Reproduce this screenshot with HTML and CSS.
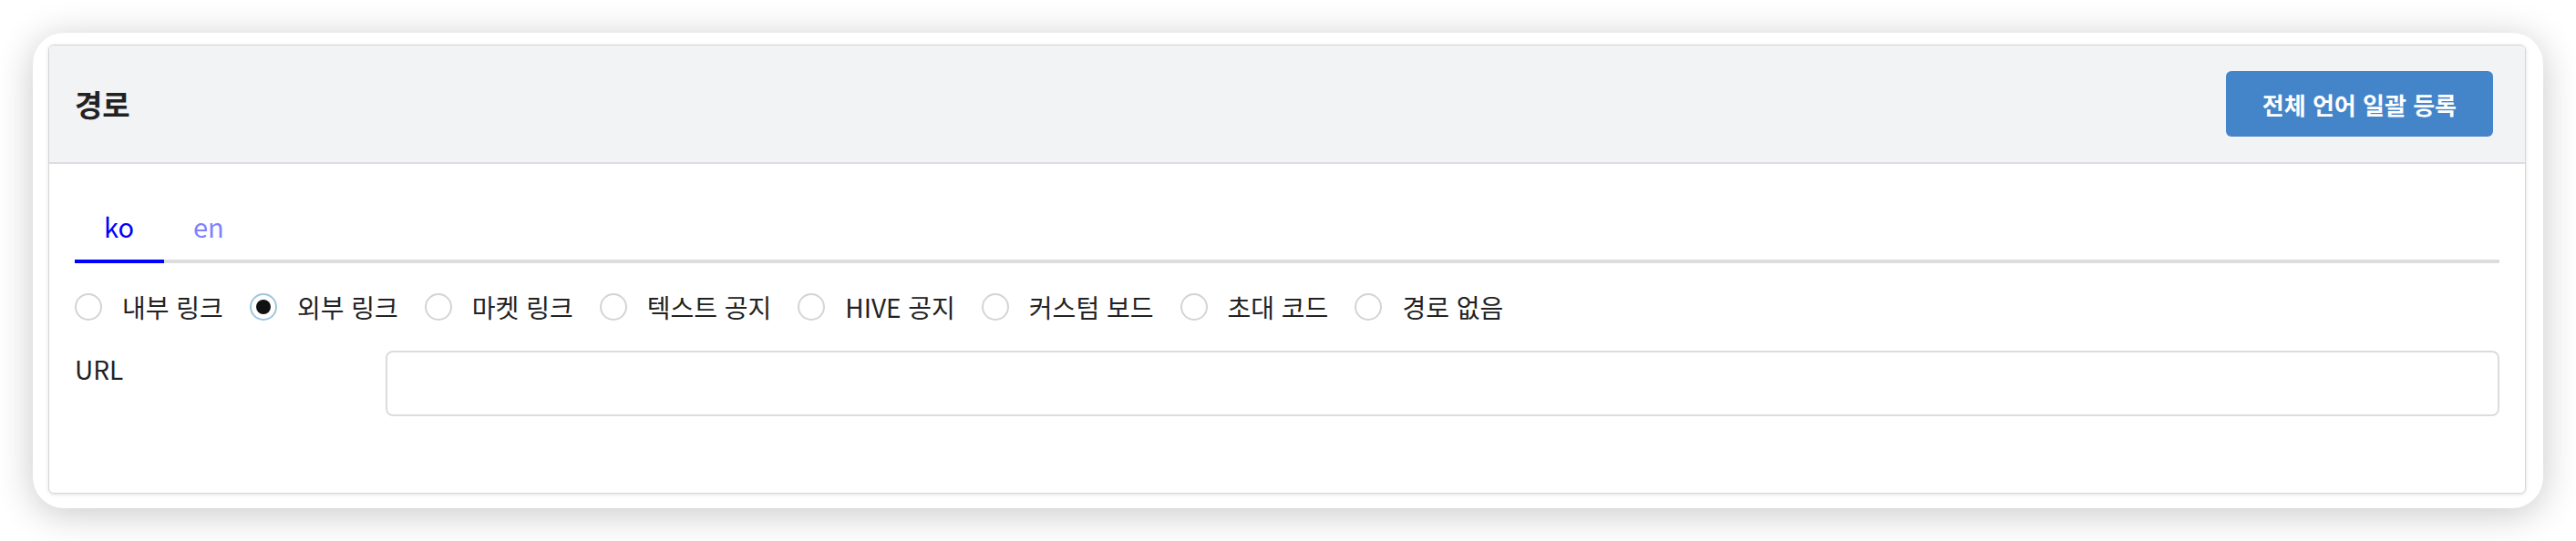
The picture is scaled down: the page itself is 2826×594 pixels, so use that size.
FILE: index.html
```html
<!DOCTYPE html>
<html lang="ko">
<head>
    <meta charset="UTF-8">
    <meta name="viewport" content="width=device-width, initial-scale=1.0">
    <title>경로</title>
    <link rel="stylesheet" href="styles.css">
</head>
<body>
    <div class="frame">
        <div class="card">
            <div class="card-header">
                <h2>경로</h2>
                <button class="btn-primary">전체 언어 일괄 등록</button>
            </div>
            <div class="card-body">
                <div class="tabs">
                    <div class="tab active">ko</div>
                    <div class="tab">en</div>
                </div>

                <div class="radio-group">
                    <label class="radio"><span class="circle"></span>내부 링크</label>
                    <label class="radio checked"><span class="circle"></span>외부 링크</label>
                    <label class="radio"><span class="circle"></span>마켓 링크</label>
                    <label class="radio"><span class="circle"></span>텍스트 공지</label>
                    <label class="radio"><span class="circle"></span>HIVE 공지</label>
                    <label class="radio"><span class="circle"></span>커스텀 보드</label>
                    <label class="radio"><span class="circle"></span>초대 코드</label>
                    <label class="radio"><span class="circle"></span>경로 없음</label>
                </div>

                <div class="form-row">
                    <label class="form-label">URL</label>
                    <input type="text" class="form-input">
                </div>
            </div>
        </div>
    </div>
</body>
</html>
```

FILE: styles.css
```css
* {
    margin: 0;
    padding: 0;
    box-sizing: border-box;
}

body {
    font-family: "Noto Sans CJK KR", "Noto Sans", sans-serif;
    color: #222;
    background: #fff;
    padding: 36px;
}

.frame {
    background: #fff;
    border-radius: 34px;
    padding: 13px 19px 16px 17px;
    box-shadow: 0 6px 40px rgba(0, 0, 0, 0.22);
}

.card {
    border: 1px solid #d6d6d6;
    border-radius: 6px;
    background: #fff;
    box-shadow: 0 1px 4px rgba(0, 0, 0, 0.12);
    overflow: hidden;
}

.card-header {
    display: flex;
    align-items: center;
    justify-content: space-between;
    height: 130px;
    padding: 0 35px 0 28px;
    background: #f2f3f5;
    border-bottom: 2px solid #dcdde0;
}

.card-header h2 {
    font-size: 33px;
    font-weight: bold;
    color: #222;
}

.btn-primary {
    height: 72px;
    padding: 0 40px;
    border: none;
    border-radius: 6px;
    background: #4485ca;
    color: #fff;
    font-family: inherit;
    font-size: 26px;
    font-weight: bold;
    cursor: pointer;
}

.card-body {
    display: flex;
    flex-direction: column;
    gap: 28px;
    padding: 30px 28px 84px;
}

/* 언어 탭 */
.tabs {
    display: flex;
    border-bottom: 4px solid #dddddd;
}

.tab {
    padding: 16px 33px 14px 32px;
    margin-bottom: -4px;
    border-bottom: 4px solid transparent;
    font-size: 29px;
    line-height: 45px;
    color: #8080ff;
    cursor: pointer;
}

.tab.active {
    color: #0000ff;
    border-bottom-color: #0000ff;
}

/* 경로 종류 */
.radio-group {
    display: flex;
    align-items: center;
    height: 40px;
}

.radio {
    display: flex;
    align-items: center;
    margin-right: 29px;
    font-size: 28px;
    line-height: 40px;
    color: #222;
    cursor: pointer;
}

.radio .circle {
    position: relative;
    width: 30px;
    height: 30px;
    margin-right: 22px;
    border: 2px solid #d4d4d4;
    border-radius: 50%;
    background: #fff;
}

.radio.checked .circle {
    border-color: #9fc6da;
}

.radio.checked .circle::after {
    content: "";
    position: absolute;
    top: 5px;
    left: 5px;
    width: 16px;
    height: 16px;
    border-radius: 50%;
    background: #111;
}

.form-row {
    display: grid;
    grid-template-columns: 341px 1fr;
    align-items: start;
}

.form-label {
    font-size: 28px;
    line-height: 40px;
    color: #222;
}

.form-input {
    height: 72px;
    border: 2px solid #dcdcdc;
    border-radius: 8px;
    background: #fff;
    font-family: inherit;
    font-size: 27px;
    padding: 0 16px;
}
```
